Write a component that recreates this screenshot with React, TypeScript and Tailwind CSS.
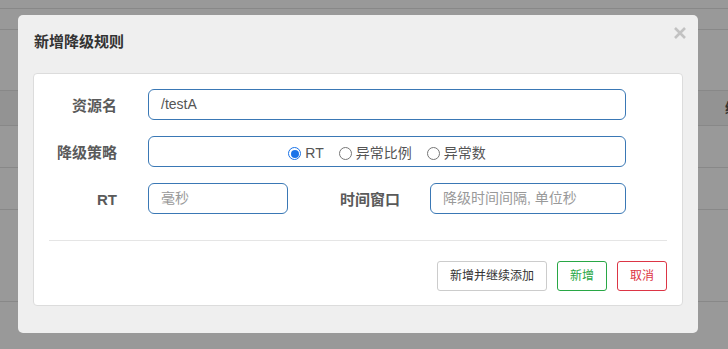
import React from "react";

const font = { fontFamily: '"Liberation Sans", Arial, "Noto Sans CJK SC", sans-serif' };

function Radio({ checked, label }: { checked?: boolean; label: string }) {
  return (
    <span className="flex items-center">
      {checked ? (
        <span className="w-[13px] h-[13px] rounded-full border border-[#1a73e8] flex items-center justify-center bg-white">
          <span className="w-[8px] h-[8px] rounded-full bg-[#1a73e8]" />
        </span>
      ) : (
        <span className="w-[13px] h-[13px] rounded-full border border-[#767676] bg-white" />
      )}
      <span className="ml-[4px] text-[14px] text-[#555]">{label}</span>
    </span>
  );
}

export default function App() {
  return (
    <div className="relative w-[728px] h-[349px] overflow-hidden bg-[#999999]" style={font}>
      {/* dimmed background table */}
      <div className="flex flex-col">
        <div className="h-[9px] border-b border-[#888]" />
        <div className="h-[21px] border-b border-[#888]" />
        <div className="h-[61px] border-b border-[#888]" />
        <div className="h-[35px] border-b border-[#888] bg-[#939393] flex justify-end items-center">
          <span className="text-[14px] text-[#333] font-bold mr-[-11px]">编</span>
        </div>
        <div className="h-[42px] border-b border-[#888]" />
        <div className="h-[42px] border-b border-[#888]" />
        <div className="h-[92px] border-b border-[#888]" />
      </div>

      {/* modal */}
      <div className="absolute left-[18px] top-[15px] w-[680px] h-[318px] bg-[#efefef] rounded-[5px] flex flex-col">
        <div className="h-[58px] flex items-center justify-between pl-[16px] pr-[12px] pb-[4px]">
          <span className="text-[15px] font-bold text-[#333]">新增降级规则</span>
          <svg width="12" height="12" viewBox="0 0 12 12" className="mb-[18px]">
            <path d="M1 1 L11 11 M11 1 L1 11" stroke="#c2c2c2" strokeWidth="2.6" />
          </svg>
        </div>
        <div className="ml-[15px] w-[650px] h-[233px] bg-white border border-[#dcdcdc] rounded-[4px] flex flex-col pt-[15px]">
          {/* row 1 */}
          <div className="flex items-center h-[31px]">
            <div className="w-[83px] text-right text-[15px] font-bold text-[#5a5a5a] mt-[4px]">资源名</div>
            <div className="ml-[31px] w-[478px] h-[31px] border border-[#3a78b5] rounded-[6px] flex items-center pl-[12px] text-[14px] text-[#555]">
              /testA
            </div>
          </div>
          {/* row 2 */}
          <div className="flex items-center h-[31px] mt-[16px]">
            <div className="w-[83px] text-right text-[15px] font-bold text-[#5a5a5a] mt-[4px]">降级策略</div>
            <div className="ml-[31px] w-[478px] h-[31px] border border-[#3a78b5] rounded-[6px] flex items-center justify-center gap-[15px] pt-[4px]">
              <Radio checked label="RT" />
              <Radio label="异常比例" />
              <Radio label="异常数" />
            </div>
          </div>
          {/* row 3 */}
          <div className="flex items-center h-[31px] mt-[16px]">
            <div className="w-[83px] text-right text-[15px] font-bold text-[#5a5a5a] mt-[4px]">RT</div>
            <div className="ml-[31px] w-[140px] h-[31px] border border-[#3a78b5] rounded-[6px] flex items-center pl-[12px] text-[14px] text-[#999]">
              毫秒
            </div>
            <div className="ml-[51px] w-[61px] text-right text-[15px] font-bold text-[#5a5a5a] mt-[4px]">时间窗口</div>
            <div className="ml-[30px] w-[196px] h-[31px] border border-[#3a78b5] rounded-[6px] flex items-center pl-[12px] text-[14px] text-[#999]">
              降级时间间隔, 单位秒
            </div>
          </div>
          {/* divider */}
          <div className="mt-[26px] ml-[15px] w-[618px] h-px bg-[#e5e5e5]" />
          {/* buttons */}
          <div className="mt-[20px] flex justify-end gap-[10px] pr-[15px]">
            <div className="h-[30px] px-[12px] border border-[#cccccc] rounded-[3px] flex items-center text-[12px] text-[#333]">
              新增并继续添加
            </div>
            <div className="h-[30px] px-[12px] border border-[#28a745] rounded-[3px] flex items-center text-[12px] text-[#28a745]">
              新增
            </div>
            <div className="h-[30px] px-[12px] border border-[#dc3545] rounded-[3px] flex items-center text-[12px] text-[#dc3545]">
              取消
            </div>
          </div>
        </div>
      </div>
    </div>
  );
}
